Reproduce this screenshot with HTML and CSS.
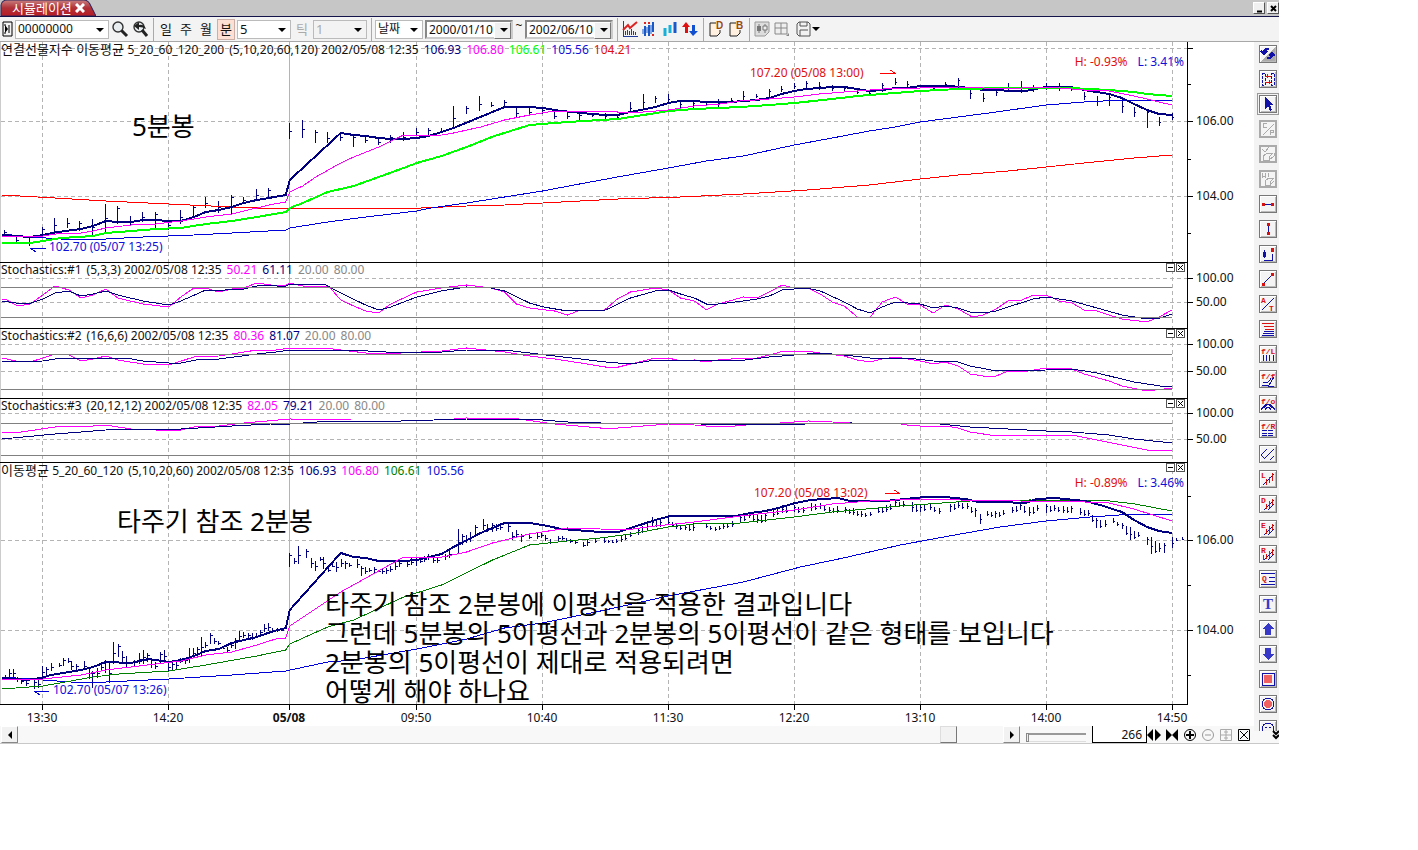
FILE: index.html
```html
<!DOCTYPE html>
<html lang="ko">
<head>
    <meta charset="UTF-8">
    <meta name="viewport" content="width=device-width, initial-scale=1.0">
    <title>시뮬레이션</title>
    <link rel="stylesheet" href="styles.css">
</head>
<body>
    <div class="window">
        <header class="titlebar">
            <div class="tab">
                <svg class="tab-shape" viewBox="0 0 94 16" preserveAspectRatio="none">
                    <defs>
                        <linearGradient id="rojo" x1="0" y1="0" x2="0" y2="1">
                            <stop offset="0" stop-color="#c98080"/>
                            <stop offset="0.5" stop-color="#b03038"/>
                            <stop offset="1" stop-color="#b81c24"/>
                        </linearGradient>
                    </defs>
                    <path d="M1 16V5Q2 0 7 0H82Q86 0 88 4L94 16Z" fill="url(#rojo)" stroke="#30265c"/>
                </svg>
                <span>시뮬레이션</span>
                <button class="tab-close" aria-label="탭 닫기"><svg width="10" height="10" viewBox="0 0 10 10"><path d="M1 1L9 9M9 1L1 9" stroke="#fff" stroke-width="3"/></svg></button>
            </div>
            <div class="win-buttons">
                <button aria-label="최소화"><svg width="9" height="9" viewBox="0 0 9 9"><path d="M2 7.5H7" stroke="#000" stroke-width="2"/></svg></button>
                <button aria-label="닫기"><svg width="9" height="9" viewBox="0 0 9 9"><path d="M2 2L7 7M7 2L2 7" stroke="#000" stroke-width="2"/></svg></button>
            </div>
        </header>

        <div class="toolbar">
            <button class="icon slim" aria-label="패널"><svg width="11" height="16" viewBox="0 0 11 16"><path d="M1 1H10V15H1ZM2 4H4M2 12H4M7 4V12" fill="none" stroke="#000"/><path d="M3 4L6 8L3 12Z"/></svg></button>
            <span class="combo code"><select aria-label="종목코드"><option>00000000</option></select></span>
            <button class="icon" aria-label="검색"><svg width="18" height="18" viewBox="0 0 18 18"><circle cx="7" cy="7" r="5" fill="#e8eef0" stroke="#333" stroke-width="1.4"/><path d="M10.500 10.500L16 16" stroke="#222" stroke-width="3"/></svg></button>
            <button class="icon" aria-label="다시 검색"><svg width="18" height="18" viewBox="0 0 18 18"><circle cx="8" cy="7" r="5" fill="#e8eef0" stroke="#333" stroke-width="1.4"/><path d="M11 10L16 16" stroke="#222" stroke-width="3"/><path d="M3 6L8 2V5Q13 4 15 9Q12 7 8 7V10Z" fill="#222"/></svg></button>
            <i class="sep"></i>
            <button class="period">일</button>
            <button class="period">주</button>
            <button class="period">월</button>
            <button class="period on">분</button>
            <span class="combo unit"><select aria-label="분 단위"><option>5</option></select></span>
            <button class="period off" disabled>틱</button>
            <span class="combo unit off"><select aria-label="틱 단위" disabled><option>1</option></select></span>
            <i class="sep"></i>
            <span class="combo kind"><select aria-label="기준"><option>날짜</option></select></span>
            <span class="combo date"><select aria-label="시작일"><option>2000/01/10</option></select></span>
            <span class="tilde">~</span>
            <span class="combo date"><select aria-label="종료일"><option>2002/06/10</option></select></span>
            <i class="sep"></i>
            <button class="icon" aria-label="지표"><svg width="16" height="16" viewBox="0 0 16 16"><path d="M1 0V15H16M3 14V10M5 14V9M7 14V10M9 14V8M11 14V10M13 14V11" fill="none" stroke="#223c9c" shape-rendering="crispEdges"/><path d="M1 9L6 4L8 7L15 1" fill="none" stroke="#d22" stroke-width="2"/></svg></button>
            <button class="icon" aria-label="신호"><svg width="16" height="16" viewBox="0 0 16 16"><path d="M3 5V15M7 4V15M11 1V11" stroke="#1858c8" stroke-width="2"/><path d="M1 8V13M5 6V12M9 4V13" stroke="#1858c8"/><path d="M2 1H4V3H2ZM10 13H12V15H10ZM6 1H8V3H6Z" fill="#d22"/></svg></button>
            <button class="icon" aria-label="봉"><svg width="16" height="16" viewBox="0 0 16 16"><path d="M3 7V15M8 4V12" stroke="#18b0d8" stroke-width="3"/><path d="M13 1V12" stroke="#1858c8" stroke-width="3"/></svg></button>
            <button class="icon" aria-label="매매"><svg width="16" height="16" viewBox="0 0 16 16"><path d="M4 1L8 6H6V12H3V6H0Z" fill="#e01010"/><path d="M11 15L7 10H10V4H13V10H16Z" fill="#1050d0"/></svg></button>
            <i class="sep"></i>
            <button class="icon" aria-label="일자 문서"><svg width="16" height="16" viewBox="0 0 16 16"><path d="M2 2H12V12L9 15H2Z" fill="#fff0e0" stroke="#222"/><path d="M8 0H16V9H8Z" fill="#f3f3f3"/><text x="8" y="8" class="doc">D</text></svg></button>
            <button class="icon" aria-label="리포트"><svg width="16" height="16" viewBox="0 0 16 16"><path d="M2 2H12V12L9 15H2Z" fill="#fff0e0" stroke="#222"/><path d="M8 0H16V9H8Z" fill="#f3f3f3"/><text x="8" y="8" class="doc">B</text></svg></button>
            <i class="sep"></i>
            <button class="icon" aria-label="봉차트" disabled><svg width="16" height="16" viewBox="0 0 16 16"><path d="M1 1H15V11L11 15H1Z" fill="#ddd" stroke="#999"/><path d="M5 3V12M11 3V12" stroke="#777"/><path d="M3 5H7V10H3Z" fill="#777"/><path d="M9 5H13V9H9Z" fill="#eee" stroke="#777"/></svg></button>
            <button class="icon" aria-label="분할" disabled><svg width="16" height="16" viewBox="0 0 16 16"><path d="M1 2H13V13H1ZM7 2V13M1 7H13" fill="#eee" stroke="#888"/><path d="M15 12V15H12Z" fill="#888"/></svg></button>
            <button class="icon save" aria-label="저장"><svg width="24" height="16" viewBox="0 0 24 16"><path d="M1 3L3 1H12L14 3V15H3L1 13ZM4 1V5H11V1M4 15V9H12" fill="none" stroke="#555"/><path d="M16 6H24L20 10Z"/></svg></button>
        </div>

        <div class="body">
            <main id="charts" class="charts">
                <section class="panel price" id="precio">
                    <div class="plot">
                        <p class="legend"><b>연결선물지수 이동평균 <small>5_20_60_120_200</small></b> <span class="args">(5,10,20,60,120) 2002/05/08 12:35</span> <span class="navy">106.93</span> <span class="pink">106.80</span> <span class="lime">106.61</span> <span class="blue">105.56</span> <span class="red">104.21</span></p>
                        <p class="range"><span class="red">H: -0.93%</span><span class="blue">L: 3.41%</span></p>
                        <p class="mark high red">107.20 (05/08 13:00)</p>
                        <p class="mark low blue">102.70 (05/07 13:25)</p>
                        <p class="note">5분봉</p>
                    </div>
                    <div class="scale"></div>
                </section>
                <section class="panel stoch1" id="stoch1">
                    <div class="plot">
                        <p class="legend"><span>Stochastics:#1</span> <span class="args">(5,3,3) 2002/05/08 12:35</span> <span class="pink">50.21</span> <span class="navy">61.11</span> <span class="gray">20.00</span> <span class="gray">80.00</span></p>
                    </div>
                    <div class="scale"></div>
                </section>
                <section class="panel stoch2" id="stoch2">
                    <div class="plot">
                        <p class="legend"><span>Stochastics:#2</span> <span class="args">(16,6,6) 2002/05/08 12:35</span> <span class="pink">80.36</span> <span class="navy">81.07</span> <span class="gray">20.00</span> <span class="gray">80.00</span></p>
                    </div>
                    <div class="scale"></div>
                </section>
                <section class="panel stoch3" id="stoch3">
                    <div class="plot">
                        <p class="legend"><span>Stochastics:#3</span> <span class="args">(20,12,12) 2002/05/08 12:35</span> <span class="pink">82.05</span> <span class="navy">79.21</span> <span class="gray">20.00</span> <span class="gray">80.00</span></p>
                    </div>
                    <div class="scale"></div>
                </section>
                <section class="panel average" id="media">
                    <div class="plot">
                        <p class="legend"><b>이동평균 <small>5_20_60_120</small></b> <span class="args">(5,10,20,60) 2002/05/08 12:35</span> <span class="navy">106.93</span> <span class="pink">106.80</span> <span class="green">106.61</span> <span class="blue">105.56</span></p>
                        <p class="range"><span class="red">H: -0.89%</span><span class="blue">L: 3.46%</span></p>
                        <p class="mark high red">107.20 (05/08 13:02)</p>
                        <p class="mark low blue">102.70 (05/07 13:26)</p>
                        <p class="note">타주기 참조 2분봉</p>
                        <p class="note question">타주기 참조 2분봉에 이평선을 적용한 결과입니다<br>그런데 5분봉의 5이평선과 2분봉의 5이평선이 같은 형태를 보입니다<br>2분봉의 5이평선이 제대로 적용되려면<br>어떻게 해야 하나요</p>
                    </div>
                    <div class="scale"></div>
                </section>
                <div class="times" id="times"></div>
            </main>
            <aside class="tools" id="tools"></aside>
        </div>

        <footer class="bottombar">
            <div class="scroll">
                <button class="arrow" aria-label="왼쪽"><svg width="8" height="8" viewBox="0 0 8 8"><path d="M6 0V8L2 4Z"/></svg></button>
                <button class="thumb" aria-label="스크롤"></button>
                <button class="arrow" aria-label="오른쪽"><svg width="8" height="8" viewBox="0 0 8 8"><path d="M2 0V8L6 4Z"/></svg></button>
            </div>
            <input class="slider" type="range" value="0" aria-label="확대">
            <input class="count" type="text" value="266" aria-label="봉 개수">
            <button class="icon" aria-label="넓게"><svg width="14" height="14" viewBox="0 0 14 14"><path d="M6 1V13L0 7ZM8 1V13L14 7Z"/></svg></button>
            <button class="icon" aria-label="좁게"><svg width="14" height="14" viewBox="0 0 14 14"><path d="M1 1V13L7 7ZM13 1V13L7 7Z"/></svg></button>
            <button class="icon" aria-label="확대"><svg width="14" height="14" viewBox="0 0 14 14"><path d="M7 3V11M3 7H11" stroke="#000" stroke-width="2"/><circle cx="7" cy="7" r="5.500" fill="none" stroke="#000"/></svg></button>
            <button class="icon" aria-label="축소"><svg width="14" height="14" viewBox="0 0 14 14"><path d="M4 7H10" stroke="#999"/><circle cx="7" cy="7" r="5.500" fill="none" stroke="#999"/></svg></button>
            <button class="icon" aria-label="격자"><svg width="14" height="14" viewBox="0 0 14 14"><path d="M1.500 1.500H12.500V12.500H1.500ZM7 2V12M2 7H12M5 4H9M5 10H9" fill="none" stroke="#aaa"/></svg></button>
            <button class="icon" aria-label="초기화"><svg width="14" height="14" viewBox="0 0 14 14"><path d="M1.500 1.500H12.500V12.500H1.500ZM3 3L11 11M11 3L3 11" fill="none" stroke="#000"/></svg></button>
            <button class="more" aria-label="더보기"><svg width="7" height="10" viewBox="0 0 7 10"><path d="M1 1L4 4L7 1M1 5L4 8L7 5" fill="none" stroke="#000" stroke-width="2"/></svg></button>
        </footer>
    </div>
    <script src="chart.js"></script>
</body>
</html>
```
FILE: styles.css
```css
/* Estilos generales */
* {
    box-sizing: border-box;
}

body {
    margin: 0;
    background-color: #fff;
    color: #111;
    font-family: "Noto Sans", "Noto Sans CJK KR", sans-serif;
    font-size: 12px;
    line-height: 16px;
}

p {
    margin: 0;
}

button, input, select {
    margin: 0;
    padding: 0;
    border: 0;
    background: none;
    color: inherit;
    font: inherit;
}

button {
    display: flex;
    align-items: center;
    justify-content: center;
    flex: none;
}

svg {
    display: block;
}

.window {
    width: calc(100% - 139px);
    background-color: #fff;
    border-bottom: 1px solid #c8c8c8;
}

/* Barra de titulo */
.titlebar {
    display: flex;
    justify-content: space-between;
    height: 17px;
    background-color: #c6c6c6;
    border-bottom: 1px solid #14144a;
}

.tab {
    position: relative;
    display: flex;
    align-items: center;
    gap: 3px;
    width: 96px;
    padding-left: 12px;
    color: #fff;
    font-size: 13px;
}

.tab-shape {
    position: absolute;
    left: 0;
    top: 0;
    width: 100%;
    height: 16px;
}

.tab span, .tab-close {
    position: relative;
}

.win-buttons {
    display: flex;
    align-items: center;
    gap: 2px;
}

.win-buttons button {
    width: 12px;
    height: 12px;
    background-color: #f0f0f0;
    border: 1px solid;
    border-color: #fff #555 #555 #fff;
}

/* Barra de herramientas */
.toolbar {
    display: flex;
    align-items: center;
    gap: 2px;
    height: 25px;
    padding: 0 2px;
    background-color: #f3f3f3;
    border-bottom: 1px solid #a8a8a8;
}

.icon {
    width: 18px;
    height: 20px;
}

.icon.slim {
    width: 11px;
}

.icon.save {
    width: 30px;
}

.toolbar .sep {
    width: 1px;
    height: 23px;
    margin: 0 1px 0 2px;
    background-color: #aaa;
}

.doc {
    fill: #a04808;
    font: bold 10px "Liberation Sans", sans-serif;
}

.combo {
    position: relative;
    height: 19px;
    flex: none;
    border: 1px solid #bbb;
    background-color: #fff;
}

.combo select {
    width: 100%;
    height: 100%;
    padding-left: 2px;
    appearance: none;
}

.combo::after {
    content: "";
    position: absolute;
    right: 4px;
    top: 7px;
    border: 4px solid transparent;
    border-top-color: #000;
    border-bottom: 0;
    pointer-events: none;
}

.code {
    width: 94px;
}

.unit {
    width: 54px;
}

.unit select {
    font-size: 13px;
}

.combo.off {
    background-color: #f3f3f3;
}

.combo select:disabled {
    color: #aaa;
    opacity: 1;
}

.kind {
    width: 48px;
}

.date {
    width: 88px;
    border: 2px solid;
    border-color: #888 #ccc #ccc #888;
}

.date::before {
    content: "";
    position: absolute;
    right: 0;
    top: 0;
    width: 15px;
    height: 15px;
    background-color: #f0f0f0;
    border: 1px solid;
    border-color: #fff #777 #777 #fff;
    pointer-events: none;
}

.date::after {
    right: 3px;
    top: 6px;
}

.tilde {
    width: 8px;
    margin-top: -6px;
    text-align: center;
}

.period {
    width: 18px;
    height: 21px;
    font-size: 13px;
}

.period.on {
    border: 1px solid #ccb0a8;
    background-color: #fde0d3;
}

.period.off {
    color: #aaa;
}

/* Graficos */
.body {
    display: grid;
    grid-template-columns: 1fr 25px;
}

.panel {
    display: grid;
    grid-template-columns: 1fr 66px;
}

.plot {
    position: relative;
    border-right: 1px solid #000;
    border-top: 1px solid #000;
}

.price .plot {
    border-top: 0;
}

.average .plot {
    border-bottom: 1px solid #000;
}

.price {
    height: 220px;
}

.stoch1 {
    height: 66px;
}

.stoch2 {
    height: 70px;
}

.stoch3 {
    height: 64px;
}

.average {
    height: 243px;
}

.plot svg.lines {
    width: 100%;
    height: 100%;
    border-left: 1px solid #ccc;
}

.lines path, .lines polyline {
    fill: none;
    vector-effect: non-scaling-stroke;
    shape-rendering: crispEdges;
}

.legend {
    position: absolute;
    left: 1px;
    top: -1px;
    display: flex;
    align-items: baseline;
    gap: 5px;
    white-space: nowrap;
}

.legend b {
    font-size: 13px;
    font-weight: normal;
}

.legend small {
    font-size: 12px;
}

.range {
    position: absolute;
    right: 3px;
    top: 12px;
    display: flex;
    gap: 10px;
}

.mark {
    position: absolute;
}

.price .high {
    left: 750px;
    top: 23px;
}

.price .low {
    left: 49px;
    top: 197px;
}

.average .high {
    left: 754px;
    top: 22px;
}

.average .low {
    left: 53px;
    top: 219px;
}

.note {
    position: absolute;
    left: 132px;
    top: 70px;
    color: #000;
    font-size: 26px;
    line-height: 29px;
    white-space: nowrap;
}

.average .note {
    left: 117px;
    top: 44px;
}

.average .question {
    left: 325px;
    top: 127px;
}

.pane-buttons {
    position: absolute;
    right: 2px;
    top: 0;
    display: flex;
    gap: 1px;
}

.pane-buttons button {
    width: 9px;
    height: 9px;
    border: 1px solid #555;
    background-color: #fff;
}

.scale {
    position: relative;
}

.scale span {
    position: absolute;
    left: 0;
    height: 16px;
    margin-top: -8px;
    padding-left: 8px;
}

.scale span::before {
    content: "";
    position: absolute;
    left: 0;
    top: 8px;
    width: 5px;
    height: 1px;
    background-color: #000;
}

.scale .minor::before {
    width: 3px;
}

.times {
    position: relative;
    height: 22px;
    margin-right: 66px;
}

.times span {
    position: absolute;
    top: 5px;
    width: 60px;
    margin-left: -30px;
    text-align: center;
}

.times span::before {
    content: "";
    position: absolute;
    left: 30px;
    top: -5px;
    width: 1px;
    height: 5px;
    background-color: #000;
}

.times .day {
    font-weight: bold;
}

/* Paleta lateral */
.tools {
    height: 689px;
    padding: 3px 0 0 5px;
    background-color: #f3f3f3;
    overflow: hidden;
}

.tools button {
    width: 18px;
    height: 18px;
    margin-bottom: 7px;
    border: 1px solid #777;
    background-color: #f4f4f4;
    box-shadow: inset 1px 1px #fff, inset -1px -1px #bbb;
}

.tools button:disabled {
    border-color: #aaa;
    box-shadow: inset 0 0 0 1px #aaa;
}

.tools .on {
    outline: 1px solid #999;
    outline-offset: 1px;
}

.tools svg {
    fill: none;
    stroke: #1010a8;
    flex: none;
    shape-rendering: crispEdges;
}

.tools .r {
    stroke: #d81010;
}

.tools .g {
    stroke: #aaa;
}

.tools text {
    fill: #d81010;
    stroke: none;
    font: bold 8px "Liberation Mono", monospace;
}

.tools .big {
    fill: #3838c8;
    font: bold 15px "Liberation Serif", serif;
}

.tools .fillb {
    fill: #3838c8;
    stroke: none;
}

.tools .fillr {
    fill: #f06060;
    stroke: none;
}

/* Barra inferior */
.bottombar {
    display: flex;
    align-items: center;
    height: 17px;
    margin-top: -5px;
    background-color: #f8f8f8;
}

.bottombar .icon {
    width: 14px;
    height: 17px;
}

.bottombar .icon + .icon {
    margin-left: 4px;
}

.scroll {
    display: flex;
    flex: 1;
    justify-content: space-between;
    padding-left: 1px;
}

.scroll button {
    width: 17px;
    height: 17px;
    background-color: #f2f2f2;
    border: 1px solid;
    border-color: #fff #888 #888 #fff;
}

.scroll .thumb {
    margin-left: auto;
    margin-right: 46px;
    border-color: #ddd #777 #777 #ddd;
}

.slider {
    width: 60px;
    height: 15px;
    margin: 0 6px;
    appearance: none;
    border-bottom: 1px solid #ddd;
}

.slider::-webkit-slider-runnable-track {
    height: 2px;
    background-color: #999;
}

.slider::-webkit-slider-thumb {
    appearance: none;
    width: 3px;
    height: 9px;
    background-color: #eee;
    border: 1px solid #888;
}

.count {
    width: 55px;
    height: 17px;
    padding-right: 4px;
    border: 1px solid #000;
    border-top: 0;
    background-color: #fff;
    text-align: right;
}

.more {
    width: 8px;
    margin-left: 20px;
    position: relative;
}

/* Colores de las series */
.navy { color: #000080; }
.pink { color: #f0f; }
.lime { color: #0f0; }
.green { color: #008000; }
.blue { color: #1010d8; }
.red { color: #e01010; }
.gray { color: #888; }
```
FILE: chart.js
```js
var ANCHO = 1187;
var NAVY = '#000080', PINK = '#ff00ff', LIME = '#00ff00', GREEN = '#008000', BLUE = '#0000d8', RED = '#ff0000';

var horas = [
    [42, '13:30'], [168, '14:20'], [289, '05/08'], [416, '09:50'], [542, '10:40'],
    [668, '11:30'], [794, '12:20'], [920, '13:10'], [1046, '14:00'], [1172, '14:50']
];

// Cada barra: x, maximo, minimo
var barras5 = '4,230,236 16,237,242 29,237,246 42,227,236 54,218,232 67,218,228 79,221,231 92,219,235 105,204,232 117,206,224 130,216,226 142,212,222 155,212,229 168,220,230 180,210,224 193,205,217 205,197,208 218,201,213 231,195,214 243,197,202 256,189,201 268,188,197 289,123,139 302,120,138 315,130,143 327,132,143 340,132,141 353,135,147 365,136,143 378,138,145 390,135,143 403,132,141 416,128,135 428,128,135 441,128,133 453,106,129 466,106,114 479,96,111 491,102,107 504,100,108 516,108,117 529,108,115 542,108,114 554,112,119 567,112,119 579,113,120 592,113,117 605,113,119 617,115,118 630,102,113 643,94,110 655,96,103 668,94,103 680,100,108 693,101,108 706,102,106 718,99,107 731,98,102 743,91,100 756,94,98 769,89,97 781,86,92 794,83,89 806,81,88 819,82,90 832,85,91 844,86,91 857,90,94 869,90,96 882,83,92 895,78,85 907,81,87 920,85,88 933,86,90 945,82,86 958,78,87 970,87,99 983,93,102 996,90,96 1008,83,92 1021,81,93 1033,85,92 1046,83,90 1059,83,91 1071,87,91 1084,92,100 1097,96,106 1109,95,106 1122,98,113 1134,107,117 1147,110,128 1159,117,126 1172,113,120';
var barras2 = '5,675,679 9,669,677 13,669,677 17,677,682 21,678,684 26,679,686 34,680,689 38,679,688 42,666,677 46,667,676 51,663,671 59,663,667 63,658,666 68,658,663 71,661,670 76,664,671 84,661,670 89,667,679 92,671,688 97,668,678 101,662,671 105,660,673 109,663,683 113,642,664 118,644,657 122,651,662 126,656,668 134,660,667 139,653,664 143,650,664 147,653,662 151,660,668 155,662,669 160,652,664 164,650,662 168,662,672 172,662,671 176,660,669 180,658,663 185,658,664 189,648,663 193,648,657 197,647,655 201,637,656 205,642,648 210,633,644 214,638,644 218,641,645 222,646,648 227,647,653 231,642,648 235,638,649 239,631,640 243,632,638 248,633,640 252,633,640 256,633,638 260,630,635 264,624,632 268,623,631 272,628,632 277,628,632 281,628,631 289,553,567 294,558,564 298,546,564 306,549,558 311,558,568 315,561,571 320,557,561 323,557,569 328,567,572 332,564,567 336,562,572 341,559,567 345,561,569 349,563,567 357,559,568 361,566,576 365,567,574 369,568,572 374,567,573 378,570,572 382,568,574 386,568,574 390,566,572 395,562,570 399,561,567 407,560,567 411,558,565 416,557,566 420,558,563 424,556,562 428,554,560 433,557,563 437,557,563 445,554,560 449,550,558 458,529,554 462,534,545 466,535,543 470,532,542 475,525,537 483,519,530 487,524,532 492,523,532 496,524,531 500,523,530 508,524,532 512,532,540 516,530,538 521,534,542 529,535,539 537,532,539 541,533,538 545,535,541 550,539,544 558,536,541 562,536,540 566,538,542 570,539,543 575,540,544 583,542,547 587,540,546 595,538,543 604,538,543 612,540,543 621,535,542 630,532,537 638,528,535 647,522,530 652,517,527 660,520,527 668,518,525 676,523,529 685,525,530 693,523,531 706,523,528 715,527,531 723,523,529 732,521,527 740,515,523 749,512,518 757,515,523 765,513,522 773,510,517 782,505,513 794,505,512 803,507,513 811,503,511 820,503,509 829,507,513 837,506,513 845,507,513 853,508,515 861,511,517 870,512,516 878,508,513 886,505,512 895,500,507 903,501,507 912,502,512 920,505,512 930,503,510 939,508,514 950,504,512 958,501,508 967,503,509 975,508,517 980,514,524 987,511,516 995,511,518 1003,510,515 1012,507,513 1020,503,510 1029,507,516 1037,505,511 1046,504,513 1054,505,511 1063,506,513 1071,506,513 1080,508,515 1088,510,516 1096,518,528 1105,520,527 1113,518,523 1122,523,529 1130,527,540 1138,532,537 1147,537,545 1151,537,554 1159,543,552 1164,543,553 1172,537,548 1176,538,541 1182,537,539';

var paneles = [
    {
        id: 'precio', top: 42, alto: 220, grid: [48, 121, 196], niveles: [], barras: barras5,
        escala: [[48, ''], [84, '', 1], [121, '106.00'], [159, '', 1], [196, '104.00'], [233, '', 1]],
        flechas: [['M880 73H895M890 70L896 74', RED], ['M45 248H30M29 248L35 252', BLUE]],
        lineas: [
            [RED, 1, '1,195 54,198 105,201 168,204 231,207 256,208 420,208 466,206 504,205 542,203 618,199 680,197 743,194 807,190 869,185 920,179 958,175 1008,171 1046,167 1084,163 1134,158 1172,155'],
            [BLUE, 1, '1,234 30,237 60,239 105,239 142,237 193,235 231,233 285,230 289,228 327,222 365,217 416,211 430,208 466,203 504,197 542,191 579,184 617,177 668,168 706,161 743,156 794,145 832,138 869,131 895,127 920,122 958,117 996,112 1046,105 1084,102 1122,100 1172,100'],
            [NAVY, 2, '1,235 29,237 42,235 57,232 80,229 92,226 105,221 117,222 130,222 142,220 155,220 168,221 180,221 193,217 205,212 218,210 231,207 243,203 256,200 268,198 285,195 289,180 340,133 353,135 365,136 378,138 390,139 403,139 416,138 428,136 441,132 453,128 504,107 529,107 542,108 561,111 592,114 605,115 617,115 630,112 655,107 668,103 680,101 693,101 706,102 731,102 743,101 756,100 769,98 781,94 794,91 806,89 819,88 832,87 844,87 857,89 869,91 882,90 895,88 907,88 920,86 950,86 960,87 970,88 983,90 1025,91 1035,89 1046,87 1070,87 1084,90 1109,94 1122,98 1134,104 1147,110 1159,114 1172,115'],
            [LIME, 2, '1,243 29,243 42,241 60,238 92,236 105,233 130,231 155,229 180,228 205,224 231,221 256,217 285,212 289,208 302,203 327,192 353,186 378,177 403,168 416,163 441,156 466,147 491,137 529,125 567,122 617,119 643,115 668,111 694,109 740,107 769,105 794,103 832,99 857,96 882,94 920,91 958,89 1008,88 1070,88 1109,90 1134,92 1147,94 1159,95 1172,96'],
            [PINK, 1, '1,236 42,236 55,234 80,233 92,231 105,228 130,225 155,224 180,221 193,219 205,217 231,214 243,211 256,208 268,205 285,202 289,192 302,186 315,177 340,163 353,157 378,147 403,135 416,136 441,135 453,133 480,127 504,120 529,115 554,111 592,111 617,112 643,112 668,110 694,106 720,104 740,101 769,99 794,97 819,94 844,92 870,90 895,88 920,88 958,87 983,88 1021,88 1046,87 1084,90 1109,91 1134,96 1147,99 1159,102 1172,105']
        ]
    },
    {
        id: 'stoch1', top: 263, alto: 65, grid: [278, 302], niveles: [287, 317], botones: true,
        escala: [[278, '100.00'], [302, '50.00']],
        lineas: [
            [PINK, 1, '1,299 6,300 17,306 29,304 42,295 54,286 68,290 80,298 92,295 105,289 117,298 142,304 168,307 180,297 193,288 205,288 218,292 231,289 243,288 256,283 270,285 283,286 289,283 302,286 328,286 340,300 353,306 365,311 378,313 390,304 416,292 440,288 466,285 490,288 504,292 516,304 529,308 554,311 567,315 580,310 604,310 617,299 630,292 643,290 655,288 668,290 680,298 694,301 706,310 718,304 743,297 757,298 769,292 782,285 794,288 808,288 820,294 832,302 844,306 857,317 870,317 882,302 895,297 907,304 920,305 933,313 945,305 958,309 972,317 983,315 996,309 1008,301 1022,300 1033,295 1046,295 1059,301 1072,303 1084,310 1097,311 1109,315 1122,319 1147,322 1159,317 1172,310'],
            [NAVY, 1, '1,301 15,303 30,303 42,299 54,293 68,291 80,296 92,294 105,291 117,295 142,301 168,305 180,301 205,290 218,291 231,289 243,289 256,286 270,285 283,287 289,284 325,285 340,293 365,305 378,310 390,307 416,297 440,291 466,287 490,288 504,291 529,303 543,307 567,311 605,310 630,298 655,291 668,290 680,294 694,298 706,304 718,304 743,301 757,299 769,296 782,290 806,288 820,291 844,302 857,309 870,313 882,307 895,302 920,304 933,308 945,306 958,308 970,312 983,313 996,311 1008,307 1033,299 1046,297 1072,301 1097,308 1122,315 1147,319 1160,318 1172,314']
        ]
    },
    {
        id: 'stoch2', top: 329, alto: 69, grid: [344, 371], niveles: [354, 389], botones: true,
        escala: [[344, '100.00'], [371, '50.00']],
        lineas: [
            [PINK, 1, '1,358 15,361 29,362 42,358 54,354 68,355 80,361 92,359 105,356 117,360 142,364 168,365 193,357 218,356 231,354 256,350 275,350 289,348 332,349 365,353 400,353 441,351 466,348 504,352 529,356 554,359 580,363 605,367 618,367 630,364 655,358 668,358 680,361 694,360 706,362 718,360 743,358 757,358 769,355 780,352 806,351 820,353 844,356 857,360 870,362 882,359 895,357 920,361 933,364 945,362 958,366 970,374 983,376 996,376 1008,371 1022,372 1046,368 1072,369 1084,374 1109,381 1122,386 1147,391 1172,388'],
            [NAVY, 1, '1,362 42,361 54,359 68,358 80,359 105,358 125,358 142,361 168,363 180,363 200,359 218,359 256,354 275,352 289,350 350,350 385,352 441,352 466,350 504,350 529,353 554,356 580,359 605,362 630,364 655,360 670,360 720,361 745,360 769,357 794,355 820,353 844,355 870,358 907,358 933,361 958,362 970,366 996,371 1046,370 1072,369 1097,373 1134,382 1160,386 1172,387']
        ]
    },
    {
        id: 'stoch3', top: 399, alto: 63, grid: [413, 439], niveles: [423, 455], botones: true,
        escala: [[413, '100.00'], [439, '50.00']],
        lineas: [
            [PINK, 1, '1,433 20,432 54,427 68,426 80,427 105,425 130,429 155,430 180,430 193,427 218,426 243,423 289,419 350,420 441,420 466,418 518,419 554,424 600,428 618,428 643,426 668,424 694,425 706,426 735,426 757,424 780,423 808,421 832,422 870,424 895,423 907,425 933,427 945,426 958,428 970,432 990,435 1072,435 1097,440 1122,445 1147,450 1172,451'],
            [NAVY, 1, '1,439 54,434 80,432 117,429 180,429 231,426 270,424 289,424 330,421 400,421 466,419 530,419 567,422 600,423 700,424 760,425 850,423 940,424 970,427 1008,429 1046,431 1072,432 1109,435 1134,439 1172,443']
        ]
    },
    {
        id: 'media', top: 463, alto: 241, grid: [540, 630], niveles: [], botones: true, barras: barras2, relleno: true,
        escala: [[496, '', 1], [540, '106.00'], [585, '', 1], [630, '104.00'], [675, '', 1]],
        flechas: [['M885 493H900M894 490L900 494', RED], ['M48 691H34M33 691L39 695', BLUE]],
        lineas: [
            [BLUE, 1, '1,677 70,682 105,682 168,679 231,675 285,671 327,662 353,660 416,649 466,639 504,628 542,623 600,611 668,596 743,582 800,567 843,558 900,545 960,534 1000,527 1046,521 1090,517 1134,514 1172,514'],
            [GREEN, 1, '1,689 42,686 92,677 118,674 168,671 205,665 256,656 285,650 289,644 327,627 353,620 403,597 441,585 492,560 529,545 567,541 600,538 630,534 668,527 694,524 740,523 794,517 832,512 900,506 970,501 1030,500 1110,501 1135,504 1172,511'],
            [NAVY, 2, '1,678 15,679 26,680 40,678 50,675 80,670 92,667 105,662 130,663 148,659 168,662 180,660 193,656 205,651 218,649 231,643 256,637 270,632 285,628 289,610 340,553 353,557 365,558 378,561 403,561 416,560 441,554 453,547 480,533 504,523 529,523 542,525 561,529 600,532 618,532 630,528 655,520 670,516 735,516 750,513 765,511 778,508 795,503 810,500 838,498 850,501 885,501 905,499 925,497 945,497 965,499 978,502 1000,502 1025,503 1037,499 1055,498 1085,501 1100,505 1122,512 1134,520 1147,527 1159,531 1172,533'],
            [PINK, 1, '1,679 42,679 80,675 105,670 155,664 180,661 205,655 231,652 256,645 275,639 285,638 289,626 340,592 403,557 441,557 466,552 492,543 529,534 567,528 600,529 625,530 655,526 694,522 740,516 794,510 832,504 870,501 920,499 960,500 1020,501 1085,502 1109,503 1134,509 1172,521']
        ]
    }
];

function trazo(d, color, extra) {
    return '<path d="' + d + '" stroke="' + color + '" ' + (extra || '') + '/>';
}

// Barras con la marca de cierre a la derecha
function dibujarBarras(texto, relleno) {
    var datos = texto.split(' ').map(function (b) { return b.split(',').map(Number); });
    var d = '';
    datos.forEach(function (b, i) {
        var cierre = i % 3 === 0 ? b[1] + 2 : Math.round((b[1] + b[2]) / 2);
        d += 'M' + b[0] + ' ' + b[1] + 'V' + b[2] + 'M' + b[0] + ' ' + cierre + 'h2';
        var sig = datos[i + 1];
        if (relleno && b[0] > 590 && sig && sig[0] - b[0] > 7 && i % 4 !== 0) {
            var alto = Math.round((b[1] + sig[1]) / 2), bajo = Math.round((b[2] + sig[2]) / 2);
            d += 'M' + (b[0] + 4) + ' ' + (alto + 1) + 'V' + bajo + 'M' + (b[0] + 4) + ' ' + (bajo - 2) + 'h2';
        }
    });
    return trazo(d, NAVY);
}

paneles.forEach(function (p) {
    var panel = document.getElementById(p.id);
    var plot = panel.querySelector('.plot');
    var fin = p.top + p.alto;
    var svg = '<svg class="lines" viewBox="0 ' + p.top + ' ' + ANCHO + ' ' + p.alto + '" preserveAspectRatio="none">';
    horas.forEach(function (h) {
        var solida = h[1] === '05/08';
        svg += trazo('M' + h[0] + ' ' + p.top + 'V' + fin, '#b4b4b4', solida ? '' : 'stroke-dasharray="4 3"');
    });
    p.grid.forEach(function (y) {
        svg += trazo('M0 ' + y + 'H' + ANCHO, '#b4b4b4', 'stroke-dasharray="4 3"');
    });
    if (p.barras) {
        svg += dibujarBarras(p.barras, p.relleno);
    }
    p.lineas.forEach(function (l) {
        svg += '<polyline points="' + l[2] + '" stroke="' + l[0] + '" stroke-width="' + l[1] + '"/>';
    });
    p.niveles.forEach(function (y) {
        svg += trazo('M0 ' + y + 'H1172', '#808080');
    });
    (p.flechas || []).forEach(function (f) {
        svg += trazo(f[0], f[1]);
    });
    plot.insertAdjacentHTML('afterbegin', svg + '</svg>');

    if (p.botones) {
        plot.insertAdjacentHTML('beforeend', '<div class="pane-buttons">' +
            '<button aria-label="최소화"><svg width="7" height="7" viewBox="0 0 7 7"><path d="M1 3.500H6" stroke="#000"/></svg></button>' +
            '<button aria-label="닫기"><svg width="7" height="7" viewBox="0 0 7 7"><path d="M1 1L6 6M6 1L1 6" stroke="#000"/></svg></button></div>');
    }

    var inicio = p.id === 'precio' ? p.top : p.top - 1;
    panel.querySelector('.scale').innerHTML = p.escala.map(function (e) {
        return '<span' + (e[2] ? ' class="minor"' : '') + ' style="top:' + (e[0] - inicio) + 'px">' + e[1] + '</span>';
    }).join('');
});

document.getElementById('times').innerHTML = horas.map(function (h) {
    return '<span' + (h[1] === '05/08' ? ' class="day"' : '') + ' style="left:' + (h[0] / (ANCHO + 1) * 100) + '%">' + h[1] + '</span>';
}).join('');

// Iconos de la paleta: nombre, dibujo, estado
var canal = '<path d="M4 14L14 4M8 14L14 8"/><path class="r" d="M6 13V8M9 12V5M12 9V3"/>';
var iconos = [
    ['새로고침', '<path d="M15 1V15H1Z" fill="#aaa" stroke="none"/><path d="M9 3Q4 2 4 7M1 5L4 8L7 5M7 12Q12 13 12 8M9 10L12 7L15 10" stroke-width="2"/>'],
    ['연동', '<path d="M2 2H5V14H2ZM11 2H14V14H11Z" stroke-dasharray="3 1"/><path class="r" d="M5 5H11M5 11H11M7 3V7M9 9V13"/>'],
    ['선택', '<path d="M5 1V13L8 10L10 15L12 14L10 9H14Z" fill="#1010a8" stroke="none"/>', 'class="on"'],
    ['CP', '<path class="g" d="M3 14L14 3M7 2H3V6H7M10 14V9H13V11H10"/>', 'disabled'],
    ['지우기', '<path class="g" d="M2 3L5 6L9 1M3 10L8 7H13L9 11V14H3ZM9 14L14 10V7"/>', 'disabled'],
    ['전체 지우기', '<path class="g" d="M2 2V7M5 2V7M8 2V6M3 5H5M5 10L9 7H14L10 11V14H5ZM10 14L14 10"/>', 'disabled'],
    ['수평선', '<path d="M3 8H13"/><path class="r" d="M2 8H5M11 8H14" stroke-width="3"/>'],
    ['수직선', '<path d="M8 3V13"/><path class="r" d="M8 2V5M8 11V14" stroke-width="3"/>'],
    ['봉 연결', '<path d="M4 4V12M4 14H12V8"/><path d="M4 6V11" stroke-width="3"/><path class="r" d="M12 2V6" stroke-width="3"/>'],
    ['추세선', '<path d="M3 13L13 3"/><path class="r" d="M2 13H5M11 3H14" stroke-width="3"/>'],
    ['AT', '<path d="M2 14L14 2"/><text x="1" y="7">A</text><text x="9" y="15">T</text>'],
    ['되돌림', '<path class="r" d="M2 2H14M4 5H14M5 8H14"/><path d="M4 10H14M3 12H14M2 14H14"/>'],
    ['fL', '<text x="1" y="8">f/L</text><path d="M3 9V15M6 9V15M9 9V15M13 9V15"/>'],
    ['팬', '<text x="1" y="8">f/f</text><path d="M2 14H9L14 6M3 12Q10 12 11 7M8 15H14"/>'],
    ['호', '<text x="1" y="8">f/o</text><path d="M1 14Q8 2 15 14M5 14Q8 8 11 14M8 8L2 13M8 8L14 13"/>'],
    ['fR', '<text x="1" y="8">f/R</text><path d="M2 9H14M2 12H14M2 14H14" stroke-dasharray="5 1"/>'],
    ['평행선', '<path d="M1 9L7 3M4 13L14 3M10 14L14 10M1 9L5 13"/>'],
    ['L', '<path d="M3 14L14 3"/><path class="r" d="M6 14V8M9 12V6M12 10V2"/><text x="1" y="7">L</text>'],
    ['D', canal + '<text x="1" y="7">D</text>'],
    ['E', canal + '<text x="1" y="7">E</text>'],
    ['R', canal + '<path class="r" d="M3 14V9"/><text x="1" y="7">R</text>'],
    ['Q', '<path d="M1 2H15M9 6H15M9 10H15M1 13H15"/><text x="2" y="10">Q</text>'],
    ['글자', '<text class="big" x="3" y="13">T</text>'],
    ['위쪽', '<path class="fillb" d="M8 2L14 8H11V14H5V8H2Z"/>'],
    ['아래쪽', '<path class="fillb" d="M8 14L14 8H11V2H5V8H2Z"/>'],
    ['사각형', '<path d="M2 2H14V14H2Z"/><path class="fillr" d="M4 4H12V12H4Z"/>'],
    ['원', '<circle cx="8" cy="8" r="6"/><circle class="fillr" cx="8" cy="8" r="4"/>'],
    ['얼굴', '<circle cx="8" cy="8" r="6"/><path d="M5 6H7M9 6H11M5 10Q8 13 11 10"/>']
];
document.getElementById('tools').innerHTML = iconos.map(function (i) {
    return '<button aria-label="' + i[0] + '" ' + (i[2] || '') + '><svg width="16" height="16" viewBox="0 0 16 16">' + i[1] + '</svg></button>';
}).join('');
```
